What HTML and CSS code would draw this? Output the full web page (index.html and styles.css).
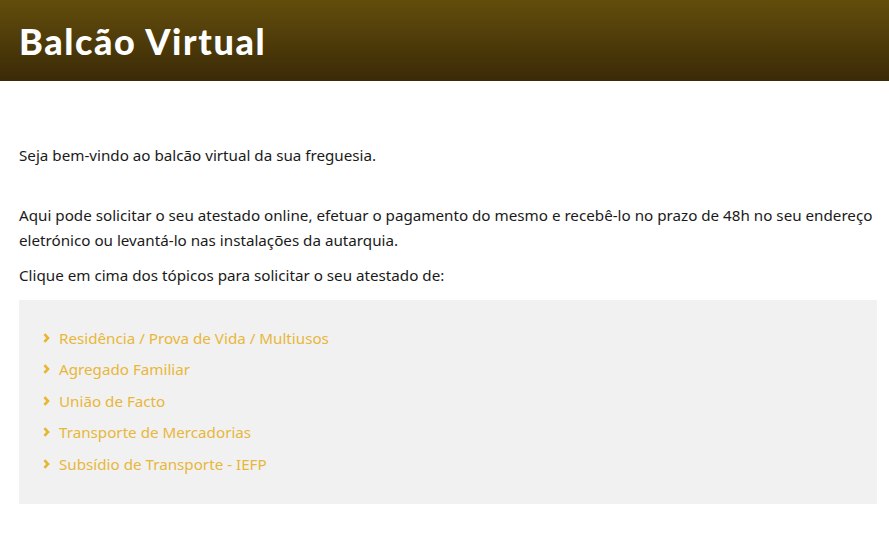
FILE: index.html
```html
<!DOCTYPE html>
<html lang="pt">
<head>
<meta charset="utf-8">
<title>Balcão Virtual</title>
<link rel="stylesheet" href="styles.css">
</head>
<body>
<header class="header">
  <h1 class="title">Balcão Virtual</h1>
</header>
<main class="content">
  <p class="intro">Seja bem-vindo ao balcão virtual da sua freguesia.</p>
  <p class="text">Aqui pode solicitar o seu atestado online, efetuar o pagamento do mesmo e recebê-lo no prazo de 48h no seu endereço eletrónico ou levantá-lo nas instalações da autarquia.</p>
  <p class="lead">Clique em cima dos tópicos para solicitar o seu atestado de:</p>
  <ul class="topics">
    <li class="topic"><svg class="chev" width="7" height="10" viewBox="0 0 7 10"><polyline points="1.4,1.2 5,5 1.4,8.8" fill="none" stroke="currentColor" stroke-width="2.6"/></svg><a class="topic-link" href="#">Residência / Prova de Vida / Multiusos</a></li>
    <li class="topic"><svg class="chev" width="7" height="10" viewBox="0 0 7 10"><polyline points="1.4,1.2 5,5 1.4,8.8" fill="none" stroke="currentColor" stroke-width="2.6"/></svg><a class="topic-link" href="#">Agregado Familiar</a></li>
    <li class="topic"><svg class="chev" width="7" height="10" viewBox="0 0 7 10"><polyline points="1.4,1.2 5,5 1.4,8.8" fill="none" stroke="currentColor" stroke-width="2.6"/></svg><a class="topic-link" href="#">União de Facto</a></li>
    <li class="topic"><svg class="chev" width="7" height="10" viewBox="0 0 7 10"><polyline points="1.4,1.2 5,5 1.4,8.8" fill="none" stroke="currentColor" stroke-width="2.6"/></svg><a class="topic-link" href="#">Transporte de Mercadorias</a></li>
    <li class="topic"><svg class="chev" width="7" height="10" viewBox="0 0 7 10"><polyline points="1.4,1.2 5,5 1.4,8.8" fill="none" stroke="currentColor" stroke-width="2.6"/></svg><a class="topic-link" href="#">Subsídio de Transporte - IEFP</a></li>
  </ul>
</main>
</body>
</html>
```
FILE: styles.css
```css
html, body {
  margin: 0;
  padding: 0;
  background: #ffffff;
}
body {
  font-family: "Noto Sans", "Open Sans", sans-serif;
  color: #1a1a1a;
}
.header {
  height: 81px;
  padding: 0 19px;
  display: flex;
  align-items: center;
  background: linear-gradient(to bottom, #634d0c 0%, #3a2a07 100%);
}
.title {
  margin: 0;
  color: #ffffff;
  font-family: Lato, sans-serif;
  font-weight: 900;
  font-size: 36px;
  letter-spacing: 1.6px;
  line-height: 1;
}
.content {
  padding: 62px 12px 40px 19px;
}
.intro, .text, .lead {
  margin: 0;
  font-size: 15.2px;
  line-height: 25px;
}
.intro {
  margin-bottom: 35px;
}
.text {
  margin-bottom: 10px;
}
.lead {
  margin-bottom: 12px;
}
.topics {
  list-style: none;
  margin: 0;
  padding: 22px 25px 24px 24px;
  background: #f1f1f1;
}
.topic {
  display: flex;
  align-items: center;
  gap: 9px;
  height: 31.5px;
  color: #e8b52e;
}
.chev {
  display: block;
  flex: none;
}
.topic-link {
  color: #e8b73a;
  text-decoration: none;
  font-size: 15.2px;
}
```
